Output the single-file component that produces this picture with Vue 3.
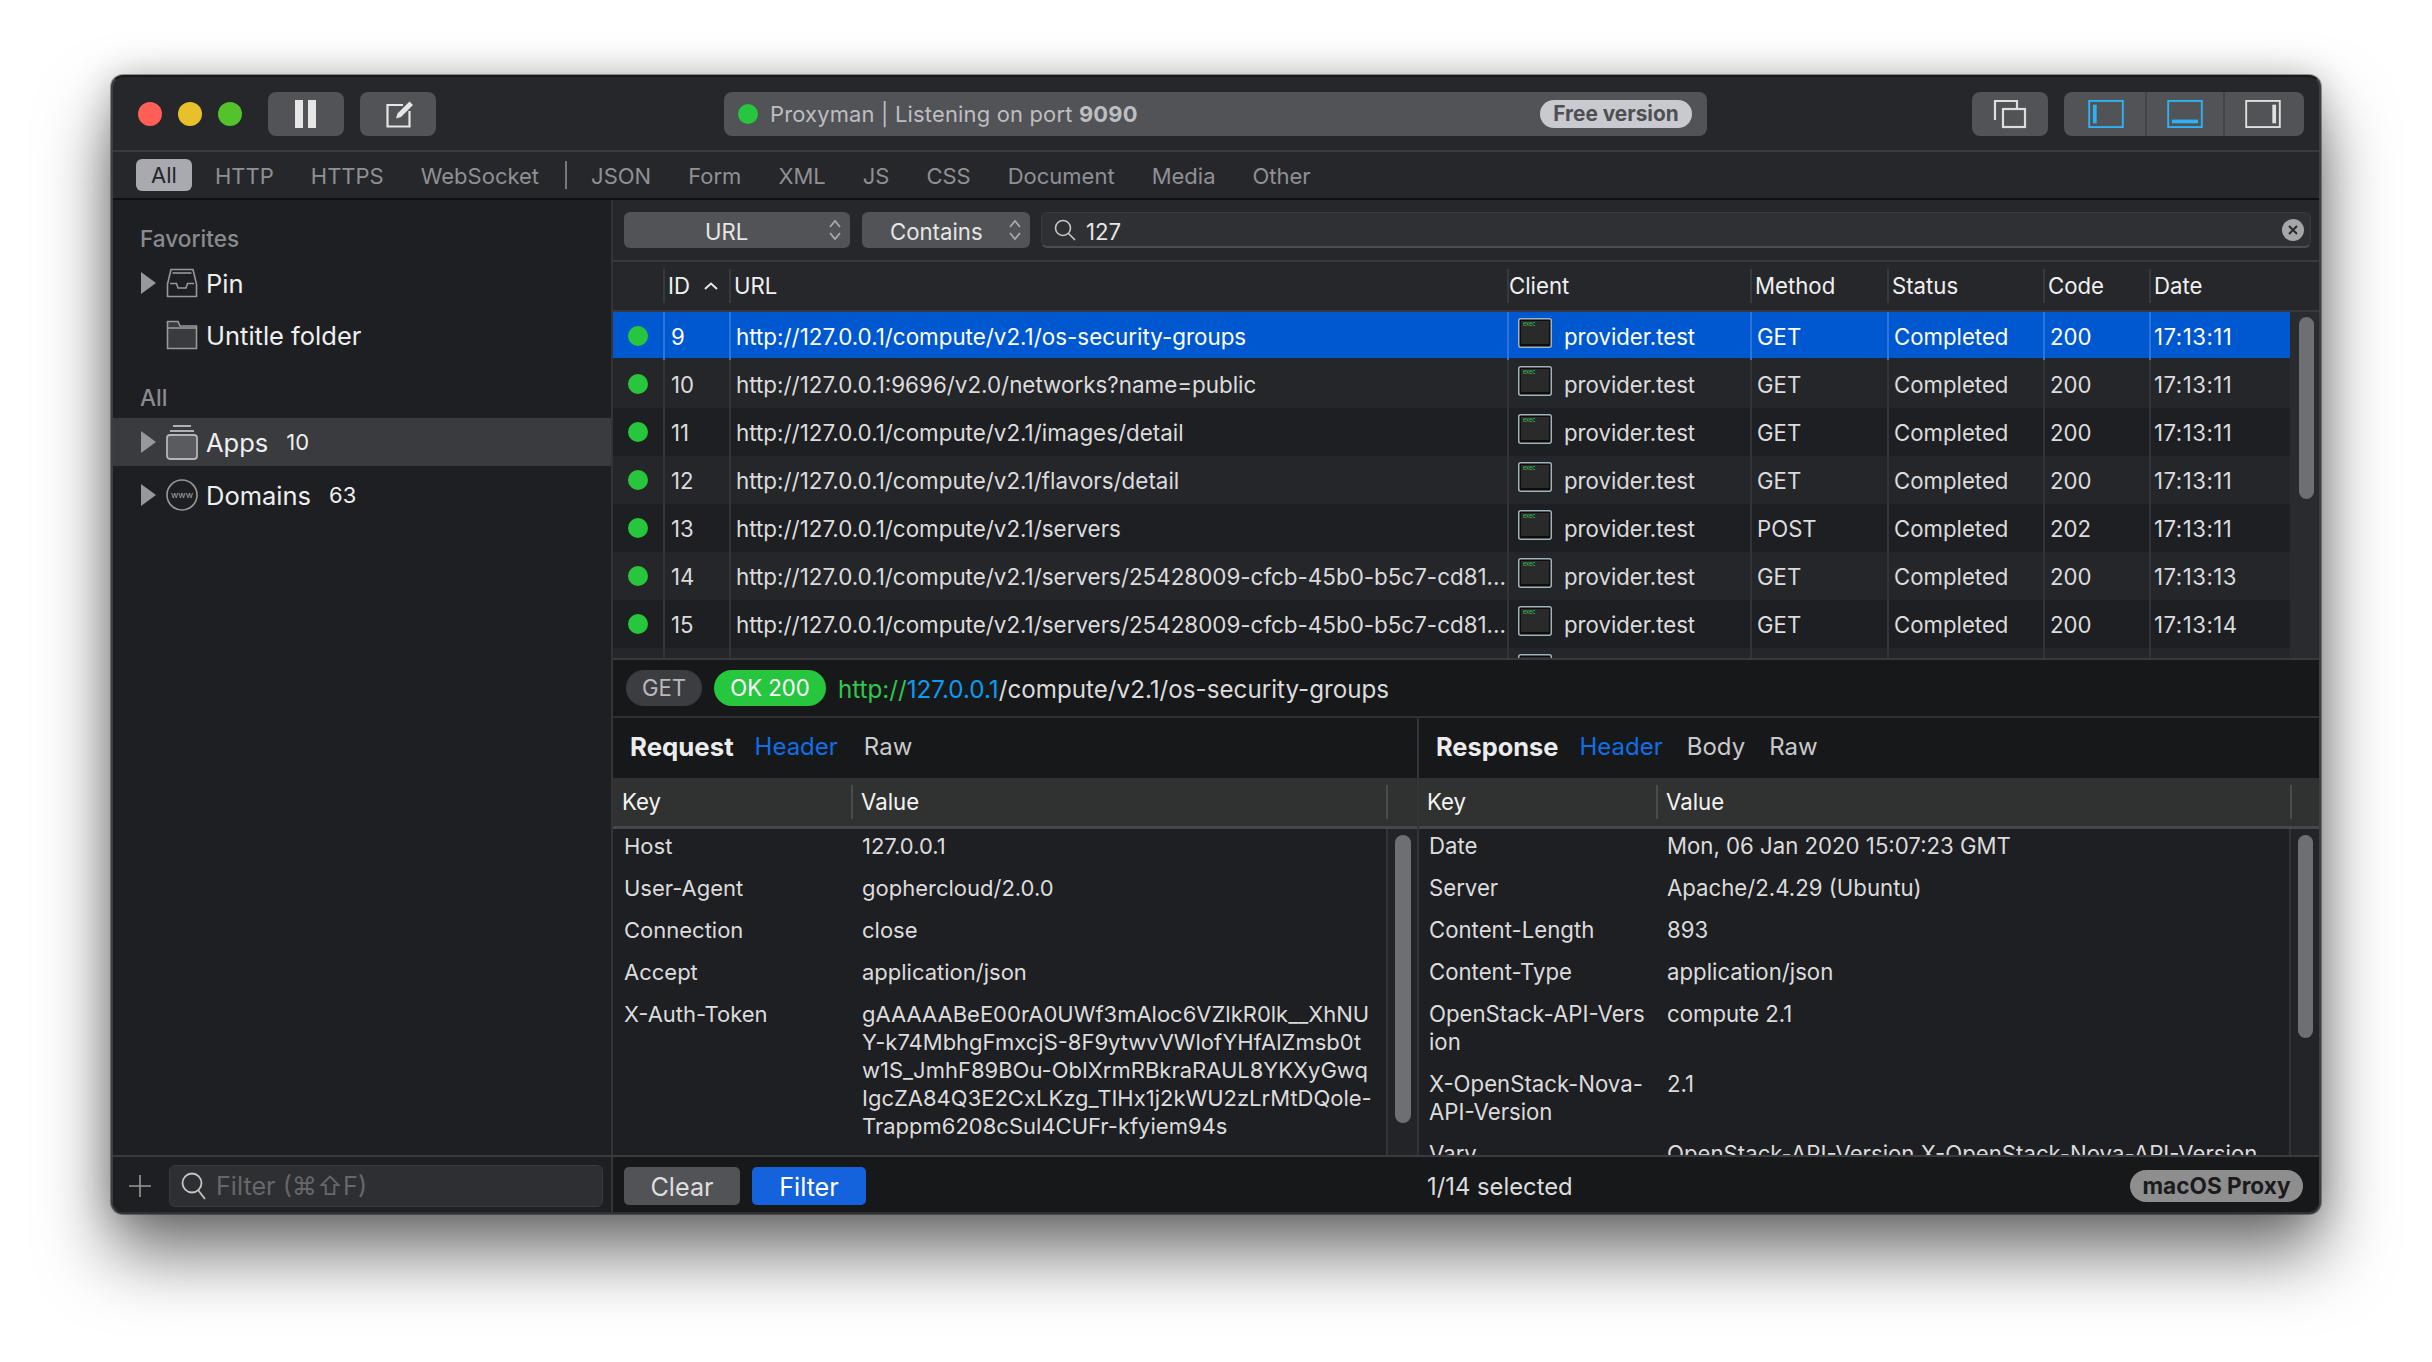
<script setup>
const tabsA = ['HTTP', 'HTTPS', 'WebSocket']
const tabsB = ['JSON', 'Form', 'XML', 'JS', 'CSS', 'Document', 'Media', 'Other']
const long = 'http://127.0.0.1/compute/v2.1/servers/25428009-cfcb-45b0-b5c7-cd81...'
const rows = [
  { id: 9, url: 'http://127.0.0.1/compute/v2.1/os-security-groups', method: 'GET', code: 200, date: '17:13:11' },
  { id: 10, url: 'http://127.0.0.1:9696/v2.0/networks?name=public', method: 'GET', code: 200, date: '17:13:11' },
  { id: 11, url: 'http://127.0.0.1/compute/v2.1/images/detail', method: 'GET', code: 200, date: '17:13:11' },
  { id: 12, url: 'http://127.0.0.1/compute/v2.1/flavors/detail', method: 'GET', code: 200, date: '17:13:11' },
  { id: 13, url: 'http://127.0.0.1/compute/v2.1/servers', method: 'POST', code: 202, date: '17:13:11' },
  { id: 14, url: long, method: 'GET', code: 200, date: '17:13:13' },
  { id: 15, url: long, method: 'GET', code: 200, date: '17:13:14' }
]
const reqHeaders = [
  ['Host', '127.0.0.1'],
  ['User-Agent', 'gophercloud/2.0.0'],
  ['Connection', 'close'],
  ['Accept', 'application/json'],
  ['X-Auth-Token', 'gAAAAABeE00rA0UWf3mAloc6VZlkR0lk__XhNU\nY-k74MbhgFmxcjS-8F9ytwvVWlofYHfAlZmsb0t\nw1S_JmhF89BOu-ObIXrmRBkraRAUL8YKXyGwq\nIgcZA84Q3E2CxLKzg_TIHx1j2kWU2zLrMtDQole-\nTrappm6208cSul4CUFr-kfyiem94s']
]
const resHeaders = [
  ['Date', 'Mon, 06 Jan 2020 15:07:23 GMT'],
  ['Server', 'Apache/2.4.29 (Ubuntu)'],
  ['Content-Length', '893'],
  ['Content-Type', 'application/json'],
  ['OpenStack-API-Vers\nion', 'compute 2.1'],
  ['X-OpenStack-Nova-\nAPI-Version', '2.1'],
  ['Vary', 'OpenStack-API-Version X-OpenStack-Nova-API-Version']
]
</script>

<template>
  <div class="page">
    <div class="win">
      <header class="titlebar">
        <div class="lights">
          <i class="light red"></i><i class="light yellow"></i><i class="light green"></i>
        </div>
        <button class="tool w-pause">
          <svg width="22" height="28" viewBox="0 0 22 28"><rect x="0" width="8" height="28" fill="#e6e6e6"/><rect x="13" width="8" height="28" fill="#e6e6e6"/></svg>
        </button>
        <button class="tool w-edit">
          <svg width="30" height="30" viewBox="0 0 30 30" fill="none"><path d="M18 6H2.500V27.500H24.500V12" stroke="#e6e6e6" stroke-width="2.200"/><path d="M11 19.500l1.500-5L24.500 2.500l3.500 3.500L16 18z" fill="#e6e6e6"/></svg>
        </button>
        <div class="status">
          <i class="dot"></i>
          <span class="status-text">Proxyman | Listening on port <b>9090</b></span>
          <span class="free">Free version</span>
        </div>
        <button class="tool w-copy">
          <svg width="34" height="30" viewBox="0 0 34 30" fill="none" stroke="#dedede" stroke-width="2.200"><path d="M2 21V2H24V10"/><rect x="10" y="10" width="22" height="18" fill="#525357"/></svg>
        </button>
        <div class="segment">
          <div class="seg seg-l">
            <svg width="36" height="28" viewBox="0 0 38 30" fill="none"><rect x="1" y="1" width="36" height="28" stroke="#2db2f6" stroke-width="2"/><rect x="5" y="5" width="4" height="20" fill="#2db2f6"/></svg>
          </div>
          <div class="seg">
            <svg width="36" height="28" viewBox="0 0 38 30" fill="none"><rect x="1" y="1" width="36" height="28" stroke="#2db2f6" stroke-width="2"/><rect x="5" y="21" width="28" height="4" fill="#2db2f6"/></svg>
          </div>
          <div class="seg seg-r">
            <svg width="36" height="28" viewBox="0 0 38 30" fill="none"><rect x="1" y="1" width="36" height="28" stroke="#e0e0e0" stroke-width="2"/><rect x="29" y="5" width="4" height="20" fill="#e0e0e0"/></svg>
          </div>
        </div>
      </header>

      <nav class="tabbar">
        <span class="tab-all">All</span>
        <span v-for="t in tabsA" :key="t" class="tab">{{ t }}</span>
        <i class="tab-sep"></i>
        <span v-for="t in tabsB" :key="t" class="tab">{{ t }}</span>
      </nav>

      <div class="content">
        <aside class="sidebar">
          <div class="side-title fav">Favorites</div>
          <div class="side-row first">
            <i class="tri"></i>
            <svg class="side-icon" width="32" height="30" viewBox="0 0 32 30" fill="none" stroke="#97989b" stroke-width="1.600"><path d="M5 1.500H27L30.500 16V28.500H1.500V16z"/><path d="M4 15.500H10.500L12 20H20L21.500 15.500H28"/><path d="M6.500 5H25.500"/></svg>
            <span>Pin</span>
          </div>
          <div class="side-row">
            <i class="tri hidden"></i>
            <svg class="side-icon" width="32" height="30" viewBox="0 0 32 30" fill="#3a3b3f" stroke="#97989b" stroke-width="1.600"><path d="M1.500 28.500V1.500H12L14 6H30.500V28.500z"/><path d="M1.500 8H30.500" fill="none"/></svg>
            <span>Untitle folder</span>
          </div>
          <div class="side-title all">All</div>
          <div class="side-row active">
            <i class="tri"></i>
            <svg class="side-icon" width="32" height="36" viewBox="0 0 32 36" fill="none"><path d="M7 2H25M4 7H28" stroke="#b0b1b4" stroke-width="1.800"/><rect x="1" y="11" width="30" height="24" rx="3" fill="#5a5b5f" stroke="#b4b5b8" stroke-width="1.800"/></svg>
            <span>Apps</span><span class="count">10</span>
          </div>
          <div class="side-row domains">
            <i class="tri"></i>
            <svg class="side-icon" width="32" height="32" viewBox="0 0 32 32" fill="none"><circle cx="16" cy="16" r="15" stroke="#97989b" stroke-width="1.600"/><text x="16" y="19" text-anchor="middle" class="www">www</text></svg>
            <span>Domains</span><span class="count">63</span>
          </div>
        </aside>

        <main class="main">
          <div class="filterbar">
            <div class="select s-url"><span>URL</span>
              <svg class="updown" width="14" height="24" viewBox="0 0 14 24" fill="none" stroke="#a8a9ac" stroke-width="1.800"><path d="M2 9l5-6 5 6M2 15l5 6 5-6"/></svg>
            </div>
            <div class="select s-contains"><span>Contains</span>
              <svg class="updown" width="14" height="24" viewBox="0 0 14 24" fill="none" stroke="#a8a9ac" stroke-width="1.800"><path d="M2 9l5-6 5 6M2 15l5 6 5-6"/></svg>
            </div>
            <div class="search">
              <svg width="22" height="22" viewBox="0 0 22 22" fill="none" stroke="#c8c8c8" stroke-width="1.600"><circle cx="9" cy="9" r="7.500"/><path d="M14.500 14.500L21 21"/></svg>
              <span class="search-text">127</span>
              <span class="clear-x">
                <svg width="10" height="10" viewBox="0 0 10 10" stroke="#2a2b2e" stroke-width="2"><path d="M1 1l8 8M9 1l-8 8"/></svg>
              </span>
            </div>
          </div>

          <div class="thead tgrid">
            <span class="th"></span>
            <span class="th th-id">ID
              <svg width="14" height="8" viewBox="0 0 14 8" fill="none" stroke="#e6e6e6" stroke-width="2"><path d="M1 7l6-5.500L13 7"/></svg>
            </span>
            <span class="th">URL</span><span class="th th-client">Client</span><span class="th">Method</span><span class="th">Status</span><span class="th">Code</span><span class="th">Date</span>
          </div>

          <div class="tbody">
            <div class="tlist">
              <div v-for="(r, i) in rows" :key="r.id" class="trow tgrid" :class="{ sel: i === 0, alt: i % 2 === 1 }">
                <span class="td"><i class="dot"></i></span>
                <span class="td td-id">{{ r.id }}</span>
                <span class="td td-url">{{ r.url }}</span>
                <span class="td td-client">
                  <svg class="term" width="34" height="30" viewBox="0 0 34 30"><rect x="0.750" y="0.750" width="32.500" height="28.500" rx="2" fill="#0d0d0d" stroke="#a2b4bb" stroke-width="1.500"/><rect x="3" y="3" width="28" height="23" fill="#2a2a2a"/><text x="5" y="8" class="exec">exec</text></svg>
                  provider.test
                </span>
                <span class="td td-p">{{ r.method }}</span>
                <span class="td td-p">Completed</span>
                <span class="td td-p">{{ r.code }}</span>
                <span class="td td-date">{{ r.date }}</span>
              </div>
              <div class="trow tgrid alt">
                <span class="td"></span><span class="td"></span><span class="td"></span>
                <span class="td td-client">
                  <svg class="term" width="34" height="30" viewBox="0 0 34 30"><rect x="0.750" y="0.750" width="32.500" height="28.500" rx="2" fill="#0d0d0d" stroke="#a2b4bb" stroke-width="1.500"/><rect x="3" y="3" width="28" height="23" fill="#2a2a2a"/></svg>
                </span>
                <span class="td"></span><span class="td"></span><span class="td"></span><span class="td"></span>
              </div>
            </div>
            <div class="tscroll"><i class="thumb t-thumb"></i></div>
          </div>

          <div class="urlbar">
            <span class="pill pill-get">GET</span>
            <span class="pill pill-ok">OK 200</span>
            <span class="fullurl"><span class="c-green">http://</span><span class="c-blue">127.0.0.1</span>/compute/v2.1/os-security-groups</span>
          </div>

          <div class="panels">
            <section class="panel req">
              <div class="phead"><b>Request</b><span class="link">Header</span><span>Raw</span></div>
              <div class="kv-head"><span>Key</span><span>Value</span><span></span></div>
              <div class="kv-body">
                <div class="kv-rows">
                  <div v-for="h in reqHeaders" :key="h[0]" class="kv-row"><span>{{ h[0] }}</span><span>{{ h[1] }}</span></div>
                </div>
                <div class="kv-scroll"><i class="thumb req-thumb"></i></div>
              </div>
            </section>
            <section class="panel res">
              <div class="phead"><b>Response</b><span class="link">Header</span><span>Body</span><span>Raw</span></div>
              <div class="kv-head"><span>Key</span><span>Value</span><span></span></div>
              <div class="kv-body">
                <div class="kv-rows">
                  <div v-for="h in resHeaders" :key="h[0]" class="kv-row"><span>{{ h[0] }}</span><span>{{ h[1] }}</span></div>
                </div>
                <div class="kv-scroll"><i class="thumb res-thumb"></i></div>
              </div>
            </section>
          </div>
        </main>
      </div>

      <footer class="bottom">
        <div class="bottom-left">
          <svg width="22" height="22" viewBox="0 0 22 22" stroke="#9a9a9a" stroke-width="1.600"><path d="M11 0V22M0 11H22"/></svg>
          <div class="side-filter">
            <svg width="26" height="28" viewBox="0 0 26 28" fill="none" stroke="#c4c4c4" stroke-width="1.800"><circle cx="11" cy="11" r="9.500"/><path d="M17 18L24 27"/></svg>
            <span>Filter (⌘⇧F)</span>
          </div>
        </div>
        <div class="bottom-right">
          <button class="btn btn-clear">Clear</button>
          <button class="btn btn-filter">Filter</button>
          <span class="selected">1/14 selected</span>
          <span class="mac">macOS Proxy</span>
        </div>
      </footer>
    </div>
  </div>
</template>

<style>
html, body { margin: 0; background: #fff; }
</style>

<style scoped>
.page {
  width: 2432px;
  height: 1362px;
  box-sizing: border-box;
  padding: 75px 111px 0;
  background: #fff;
  font-family: Inter, "Liberation Sans", sans-serif;
  font-size: 22.200px;
  color: #dcdcdc;
  overflow: hidden;
}
.win {
  width: 2210px;
  height: 1139px;
  box-sizing: border-box;
  border: 2px solid #3d3e41;
  border-top-color: #18191b;
  border-bottom-color: #2f3033;
  border-radius: 12px;
  background: #26272b;
  box-shadow: 0 0 0 1px rgba(0,0,0,.35), 0 40px 70px rgba(0,0,0,.55), 0 0 36px rgba(0,0,0,.22);
  display: flex;
  flex-direction: column;
  overflow: hidden;
}
.titlebar {
  height: 73px;
  flex: none;
  border-bottom: 2px solid #3a3b3e;
  display: flex;
  align-items: center;
  padding-left: 25px;
}
.lights { display: flex; gap: 16px; margin-right: 26px; }
.light { width: 24px; height: 24px; border-radius: 50%; display: block; }
.red { background: #ff5f57; }
.yellow { background: #e8c02c; }
.green { background: #53c22b; }
.tool {
  height: 44px;
  border: 0;
  padding: 0;
  background: #525357;
  border-radius: 8px;
  display: flex;
  align-items: center;
  justify-content: center;
}
.w-pause { width: 76px; margin-right: 16px; }
.w-edit { width: 76px; margin-right: 288px; padding-left: 3px; }
.status {
  width: 983px;
  height: 44px;
  box-sizing: border-box;
  background: #525357;
  border-radius: 8px;
  display: flex;
  align-items: center;
  padding: 0 15px 0 14px;
  color: #bdbec1;
  font-size: 21.900px;
}
.status-text { margin-left: 12px; flex: 1; letter-spacing: .2px; }
.status-text b { font-weight: 700; }
.dot {
  display: block;
  width: 20px;
  height: 20px;
  border-radius: 50%;
  background: #27c63f;
  flex: none;
}
.free {
  width: 152px;
  height: 28px;
  border-radius: 14px;
  background: #c9cacf;
  color: #4e4f53;
  font-size: 20.800px;
  font-weight: 700;
  text-align: center;
  line-height: 28px;
}
.w-copy { width: 76px; margin: 0 16px 0 265px; }
.segment {
  width: 240px;
  height: 44px;
  display: grid;
  grid-template-columns: 81px 78px 81px;
  background: #525357;
  border-radius: 8px;
}
.seg { display: flex; align-items: center; justify-content: center; }
.seg + .seg { border-left: 2px solid #434448; }
.seg-l { padding-left: 3px; }
.seg-r { padding-right: 4px; }

.tabbar {
  height: 46px;
  flex: none;
  border-bottom: 2px solid #0f0f10;
  display: flex;
  align-items: center;
  padding-left: 23px;
  color: #8f9094;
  font-size: 22px;
}
.tab-all {
  width: 56px;
  height: 32px;
  line-height: 32px;
  text-align: center;
  background: #a9aab0;
  color: #25262a;
  border-radius: 6px;
  margin-right: 23px;
}
.tab { margin-right: 37px; padding-top: 1px; }
.tab-sep { width: 2px; height: 28px; background: #77787c; margin: 0 24px 0 -11px; }

.content { flex: 1; min-height: 0; display: flex; }
.sidebar {
  width: 500px;
  flex: none;
  box-sizing: border-box;
  border-right: 2px solid #333437;
  background: #1e1f22;
  font-size: 25.500px;
  color: #efefef;
}
.side-title { padding-left: 27px; font-size: 22.600px; font-weight: 500; color: #8a8b8e; line-height: 26px; }
.fav { padding-top: 26px; }
.all { margin-top: 26px; margin-bottom: 7px; }
.side-row {
  height: 48px;
  display: flex;
  align-items: center;
  padding-left: 28px;
  margin-bottom: 4px;
  white-space: nowrap;
}
.first { margin-top: 7px; }
.active { background: #3a3b3e; }
.domains { margin-top: 5px; }
.tri {
  width: 0;
  height: 0;
  border-left: 15px solid #97989b;
  border-top: 11px solid transparent;
  border-bottom: 11px solid transparent;
  margin-right: 10px;
  flex: none;
}
.tri.hidden { visibility: hidden; }
.side-icon { margin-right: 8px; flex: none; }
.www { font-size: 9px; fill: #a4a5a8; }
.count { font-size: 22px; margin-left: 18px; }

.main { flex: 1; min-width: 0; display: flex; flex-direction: column; }
.filterbar {
  height: 60px;
  flex: none;
  border-bottom: 2px solid #38393c;
  display: flex;
  align-items: center;
  padding-left: 11px;
}
.select {
  height: 36px;
  box-sizing: border-box;
  border-radius: 6px;
  background: #525357;
  display: flex;
  align-items: center;
  color: #e6e6e6;
  position: relative;
  margin-right: 12px;
  padding-top: 3px;
}
.s-url { width: 226px; padding-left: 81px; }
.s-contains { width: 168px; padding-left: 28px; margin-right: 11px; }
.updown { position: absolute; right: 8px; top: 6px; }
.search {
  width: 1270px;
  height: 36px;
  box-sizing: border-box;
  background: #2f3034;
  border: 1px solid #3a3b3e;
  border-bottom: 2px solid #4c4d50;
  border-radius: 6px;
  display: flex;
  align-items: center;
  padding: 0 6px 0 12px;
}
.search-text { margin-left: 10px; flex: 1; color: #e6e6e6; padding-top: 3px; }
.clear-x {
  width: 22px;
  height: 22px;
  border-radius: 50%;
  background: #a5a6a8;
  display: flex;
  align-items: center;
  justify-content: center;
}

.tgrid { display: grid; grid-template-columns: 50px 66px 778px 243px 137px 156px 106px 141px; }
.thead {
  height: 48px;
  flex: none;
  border-bottom: 2px solid #38393c;
  align-items: center;
  color: #f0f0f0;
}
.th { height: 34px; line-height: 34px; border-left: 2px solid #38393c; padding-left: 3px; box-sizing: border-box; white-space: nowrap; }
.th:first-child { border-left: 0; }
.th-id { display: flex; align-items: center; gap: 14px; }
.th-client { padding-left: 0; }
.tbody { height: 346px; flex: none; display: flex; overflow: hidden; background: #1e1f22; }
.tlist { width: 1677px; flex: none; }
.trow { height: 48px; background: #1e1f22; }
.trow.alt { background: #25262a; }
.trow.sel { background: #0058d0; color: #fff; box-shadow: inset 0 -2px 0 #25262a; }
.td { border-left: 2px solid #33343a; display: flex; align-items: center; box-sizing: border-box; white-space: nowrap; height: 48px; }
.td:first-child { border-left: 0; padding-left: 15px; }
.sel .td { border-left-color: #2c74d8; }
.td-id { padding-left: 6px; }
.td-url { padding-left: 5px; overflow: hidden; font-size: 22.400px; }
.td-client { padding-left: 9px; gap: 12px; }
.term { margin-bottom: 6px; }
.exec { font-size: 5.500px; fill: #35c24d; }
.td-p { padding-left: 5px; }
.td-date { padding-left: 3px; letter-spacing: .5px; }
.tscroll { flex: 1; background: #2a2b2e; padding: 5px 5px 0 9px; }
.thumb { display: block; background: #6e6f72; border-radius: 8px; }
.t-thumb { height: 182px; }

.urlbar {
  height: 56px;
  flex: none;
  border-top: 2px solid #38393c;
  border-bottom: 2px solid #2f3033;
  background: #17181a;
  display: flex;
  align-items: center;
  padding-left: 13px;
  white-space: nowrap;
}
.pill { height: 36px; line-height: 36px; border-radius: 18px; text-align: center; flex: none; }
.pill-get { width: 76px; background: #3c3d41; color: #b8b9bc; margin-right: 12px; }
.pill-ok { width: 112px; background: #27c63f; color: #fff; margin-right: 12px; }
.fullurl { font-size: 24.200px; color: #dcdcdc; padding-top: 2px; }
.c-green { color: #2fc84c; }
.c-blue { color: #0a9cf0; }

.panels { flex: 1; min-height: 0; display: grid; grid-template-columns: 806px 900px; }
.panel { display: flex; flex-direction: column; min-height: 0; overflow: hidden; }
.req { border-right: 2px solid #333437; box-sizing: border-box; }
.phead {
  height: 60px;
  flex: none;
  box-sizing: border-box;
  padding: 0 0 3px 17px;
  background: #17181a;
  display: flex;
  align-items: center;
  gap: 26px;
  color: #c8c9cc;
  font-size: 24px;
}
.phead b { color: #ececec; font-weight: 700; margin-right: -5px; font-size: 25.800px; }
.res .phead { gap: 24px; }
.res .phead b { font-size: 25.400px; margin-right: -3px; }
.link { color: #0f6fe8; }
.kv-head {
  height: 48px;
  flex: none;
  display: grid;
  align-items: center;
  background: #303232;
  border-bottom: 3px solid #45474a;
  color: #f4f4f4;
}
.kv-head span { height: 34px; line-height: 34px; box-sizing: border-box; }
.kv-head span + span { border-left: 2px solid #494b4d; padding-left: 8px; }
.req .kv-head { padding-left: 9px; grid-template-columns: 229px 535px 1fr; }
.res .kv-head { grid-template-columns: 229px 634px 1fr; padding-left: 8px; }
.kv-body { flex: 1; min-height: 0; display: flex; background: #1e1f22; overflow: hidden; }
.kv-rows { flex: 1; min-width: 0; padding-top: 3px; display: flex; flex-direction: column; gap: 14px; overflow: hidden; }
.kv-row { display: grid; line-height: 28px; white-space: pre-line; flex: none; }
.req .kv-row { padding-left: 11px; grid-template-columns: 238px 1fr; font-size: 22px; }
.res .kv-row { grid-template-columns: 238px 1fr; padding-left: 10px; }
.kv-scroll { width: 31px; flex: none; box-sizing: border-box; border-left: 2px solid #333437; background: #232427; padding: 6px 6px 0 7px; }
.res .kv-scroll { width: 30px; padding-left: 7px; }
.req-thumb { height: 288px; }
.res-thumb { height: 203px; }

.bottom {
  height: 57px;
  flex: none;
  box-sizing: border-box;
  border-top: 2px solid #3a3b3e;
  background: #17181a;
  display: flex;
}
.bottom-left {
  width: 500px;
  flex: none;
  box-sizing: border-box;
  border-right: 2px solid #333437;
  background: #1e1f22;
  display: flex;
  align-items: center;
  padding: 3px 0 0 16px;
  gap: 18px;
}
.side-filter {
  width: 434px;
  height: 42px;
  box-sizing: border-box;
  background: #2e2f32;
  border: 1px solid #3a3b3e;
  border-radius: 6px;
  display: flex;
  align-items: center;
  padding-left: 11px;
  gap: 9px;
  font-size: 25.200px;
  color: #66676a;
}
.bottom-right { flex: 1; display: flex; align-items: center; padding: 3px 16px 0 11px; }
.btn { height: 38px; border: 0; border-radius: 5px; padding: 2px 0 0; font: inherit; font-size: 25.200px; margin-right: 12px; }
.btn-clear { width: 116px; background: #525357; color: #dedede; }
.btn-filter { width: 114px; background: #1463dc; color: #fff; margin-right: 0; }
.selected { margin-left: 561px; flex: 1; font-size: 23.800px; }
.mac {
  width: 173px;
  height: 32px;
  line-height: 32px;
  border-radius: 16px;
  background: #8e8e8e;
  color: #1b1b1d;
  font-weight: 700;
  text-align: center;
  font-size: 22.600px;
}
</style>
